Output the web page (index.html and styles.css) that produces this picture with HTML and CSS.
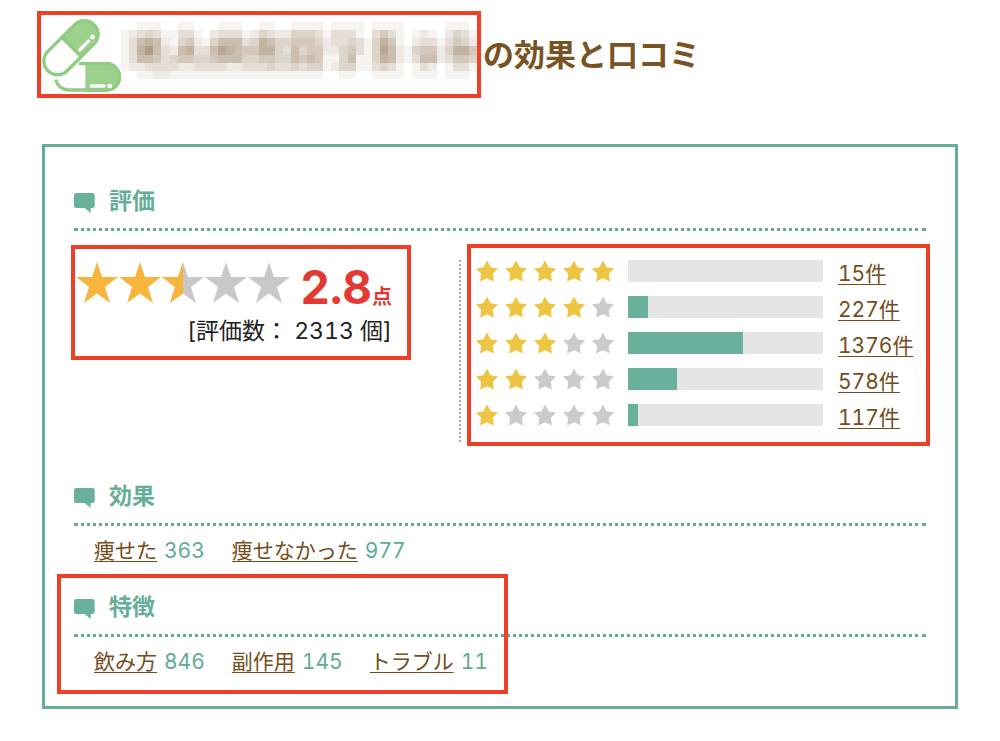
FILE: index.html
```html
<!DOCTYPE html>
<html lang="ja">
<head>
    <meta charset="UTF-8">
    <meta name="viewport" content="width=device-width, initial-scale=1.0">
    <title>効果と口コミ</title>
    <link rel="stylesheet" href="styles.css">
</head>
<body>
    <!-- アイコン定義 -->
    <svg class="defs" width="0" height="0" aria-hidden="true">
        <symbol id="star-big" viewBox="0 0 42 41"><path d="M21 0L26 15H42L29 25L34 41L21 31.500L8 41L13 25L0 15H16Z"/></symbol>
        <symbol id="star-half" viewBox="0 0 42 41"><path d="M21 0V31.500L8 41L13 25L0 15H16Z"/></symbol>
        <symbol id="star" viewBox="0 0 22 22"><path d="M11 0.500L14.600 7.200L22 8.600L16.800 13.800L17.800 21.500L11 18.200L4.200 21.500L5.200 13.800L0 8.600L7.400 7.200Z"/></symbol>
        <symbol id="bubble" viewBox="0 0 63 60"><path d="M7 0H55Q62 0 62 7V38Q62 45 55 45H50V60L32 45H7Q0 45 0 38V7Q0 0 7 0Z"/></symbol>
    </svg>

    <!-- タイトル -->
    <h1 class="title">
        <span class="product">
            <svg class="logo" viewBox="33 38 240 228" aria-hidden="true">
                <g transform="rotate(-45 123 127)">
                    <path class="pill-fill" d="M122 87H184A40 40 0 0 1 184 167H122Z"/>
                    <rect class="pill-line" x="25" y="86" width="196" height="82" rx="41"/>
                    <path class="pill-line" d="M126 86V168"/>
                    <path class="pill-shine" d="M137 150H174"/>
                    <circle class="pill-dot" cx="191" cy="150" r="7"/>
                </g>
                <path class="pill-fill" d="M166 170H229A45 45 0 0 1 229 260H166Z"/>
                <path class="pill-line" d="M147 175H229A39 39 0 0 1 229 254H115Q85 252 77 223"/>
                <path class="pill-shine" d="M184 242H222"/>
                <circle class="pill-dot" cx="239" cy="242" r="7"/>
            </svg>
            <svg class="mosaic" id="mosaic" viewBox="0 0 44 8" preserveAspectRatio="none" shape-rendering="crispEdges" aria-hidden="true"></svg>
        </span>
        <span>の効果と口コミ</span>
    </h1>

    <main class="card">
        <!-- 評価 -->
        <section class="section">
            <h2><svg class="bubble" aria-hidden="true"><use href="#bubble"/></svg>評価</h2>
            <div class="rating">
                <div class="summary">
                    <div class="summary-box">
                        <div class="score">
                            <span class="stars-big">
                                <svg class="on"><use href="#star-big"/></svg>
                                <svg class="on"><use href="#star-big"/></svg>
                                <svg><use href="#star-big"/><use class="on" href="#star-half"/></svg>
                                <svg><use href="#star-big"/></svg>
                                <svg><use href="#star-big"/></svg>
                            </span>
                            <strong>2.8<small>点</small></strong>
                        </div>
                        <p class="count">[評価数： 2313 個]</p>
                    </div>
                </div>
                <div class="detail">
                    <ul class="bars">
                        <li>
                            <span class="stars"><svg class="on"><use href="#star"/></svg><svg class="on"><use href="#star"/></svg><svg class="on"><use href="#star"/></svg><svg class="on"><use href="#star"/></svg><svg class="on"><use href="#star"/></svg></span>
                            <span class="bar"><span class="fill" style="width: 0%"></span></span>
                            <a href="#">15件</a>
                        </li>
                        <li>
                            <span class="stars"><svg class="on"><use href="#star"/></svg><svg class="on"><use href="#star"/></svg><svg class="on"><use href="#star"/></svg><svg class="on"><use href="#star"/></svg><svg><use href="#star"/></svg></span>
                            <span class="bar"><span class="fill" style="width: 10%"></span></span>
                            <a href="#">227件</a>
                        </li>
                        <li>
                            <span class="stars"><svg class="on"><use href="#star"/></svg><svg class="on"><use href="#star"/></svg><svg class="on"><use href="#star"/></svg><svg><use href="#star"/></svg><svg><use href="#star"/></svg></span>
                            <span class="bar"><span class="fill" style="width: 59%"></span></span>
                            <a href="#">1376件</a>
                        </li>
                        <li>
                            <span class="stars"><svg class="on"><use href="#star"/></svg><svg class="on"><use href="#star"/></svg><svg><use href="#star"/></svg><svg><use href="#star"/></svg><svg><use href="#star"/></svg></span>
                            <span class="bar"><span class="fill" style="width: 25%"></span></span>
                            <a href="#">578件</a>
                        </li>
                        <li>
                            <span class="stars"><svg class="on"><use href="#star"/></svg><svg><use href="#star"/></svg><svg><use href="#star"/></svg><svg><use href="#star"/></svg><svg><use href="#star"/></svg></span>
                            <span class="bar"><span class="fill" style="width: 5%"></span></span>
                            <a href="#">117件</a>
                        </li>
                    </ul>
                </div>
            </div>
        </section>

        <!-- 効果 -->
        <section class="section">
            <h2><svg class="bubble" aria-hidden="true"><use href="#bubble"/></svg>効果</h2>
            <ul class="tags">
                <li><a href="#">痩せた</a><span>363</span></li>
                <li><a href="#">痩せなかった</a><span>977</span></li>
            </ul>
        </section>

        <!-- 特徴 -->
        <section class="section marked">
            <h2><svg class="bubble" aria-hidden="true"><use href="#bubble"/></svg>特徴</h2>
            <ul class="tags">
                <li><a href="#">飲み方</a><span>846</span></li>
                <li><a href="#">副作用</a><span>145</span></li>
                <li><a href="#">トラブル</a><span>11</span></li>
            </ul>
        </section>
    </main>

    <script src="mosaic.js"></script>
</body>
</html>
```

FILE: styles.css
```css
* { margin: 0; padding: 0; box-sizing: border-box; }
body { padding: 11px 42px 32px; background: #fff; color: #222; font-family: Inter, "Noto Sans CJK JP", sans-serif; font-size: 21px; font-variant-numeric: tabular-nums; }
ul { list-style: none; }
a { color: #754c1b; text-decoration: underline; text-decoration-thickness: 1px; text-underline-offset: 3px; }
.defs { position: absolute; }

/* タイトル */
.title { display: flex; align-items: center; gap: 2px; margin: 0 0 46px -5px; color: #795321; font-size: 31px; line-height: 44px; white-space: nowrap; }
.product { display: flex; align-items: flex-start; width: 444px; height: 87px; border: 4px solid #ee4027; }
.logo { flex: none; width: 80px; height: 76px; margin-top: 3px; }
.mosaic { flex: 1; min-width: 0; height: 65px; margin-top: 7px; fill: #7a5730; }
.pill-fill { fill: #9bd18c; }
.pill-line { fill: none; stroke: #90cc82; stroke-width: 10; }
.pill-shine { stroke: #fff; stroke-width: 10; stroke-linecap: round; }
.pill-dot { fill: #fff; }

/* カード */
.card { padding: 37px 29px 29px; border: 3px solid #65ae98; }
.section h2 { display: flex; align-items: center; gap: 14px; padding-bottom: 10px; border-bottom: 3px dotted #5fac94; color: #65ae98; font-size: 23px; line-height: 34px; }
.bubble { width: 21px; height: 20px; margin-top: 4px; fill: #6ab19d; }

/* 評価 */
.rating { display: grid; grid-template-columns: 385fr 467fr; padding: 29px 0 37px; }
.summary-box { position: relative; width: 318px; }
.score { display: flex; justify-content: space-between; height: 54px; padding: 2px 0 0 2px; }
.stars-big { display: flex; gap: 1px; fill: #c8c8c8; }
.stars-big svg { width: 42px; height: 41px; }
.score strong { color: #e23a32; font-size: 46px; line-height: 50px; white-space: nowrap; }
.score small { font-size: 20px; }
.count { font-size: 23px; line-height: 34px; text-align: right; white-space: nowrap; }
.on, .stars-big .on { fill: #f8b53e; }
.detail { padding-left: 15px; border-left: 2px dotted #aaa; }
.bars { position: relative; padding-bottom: 2px; }
.bars li { display: flex; align-items: flex-start; height: 36px; }
.bars a { line-height: 28px; white-space: nowrap; }
.stars { display: flex; gap: 7px; margin-right: 14px; fill: #cbcbcb; }
.stars svg { width: 22px; height: 22px; }
.stars .on { fill: #eec443; }
.bar { flex: 0 1 195px; height: 22px; margin-right: 15px; background: #e5e5e5; }
.fill { display: block; height: 100%; background: #6ab19d; }

/* 件数リンク */
.tags { display: flex; gap: 27px; padding: 10px 0 24px 20px; line-height: 30px; }
.tags li { display: flex; gap: 7px; white-space: nowrap; }
.tags span { color: #5fac94; }
.marked { position: relative; }
.marked .tags { padding-bottom: 0; }

/* 赤枠 */
.summary-box::after, .bars::after, .marked::after { content: ""; position: absolute; border: 4px solid #ee4027; box-sizing: border-box; pointer-events: none; }
.summary-box::after { inset: -15px -19px -12px -3px; }
.bars::after { inset: -16px -4px -4px -9px; }
.marked::after { top: -16px; bottom: -17px; left: -17px; width: 451px; }
```

FILE: mosaic.js
```javascript
// 各行の数字はモザイクの濃さ (0-9)
const rows = [
    '00111001100011100110011110111101111000001110',
    '12343113310233312432244431333103531012102431',
    '13676214521466634764455542334314751023313542',
    '13796326733687655774364552245314862145524775',
    '13665345544566644554465651146114762136623554',
    '12233332233332233343343441244113431013201331',
    '00112211111111111111111110011001111011101110',
    '00000000000000000000000000000000000000000000'
];

const mosaic = document.getElementById('mosaic');
rows.forEach((row, y) => {
    [...row].forEach((level, x) => {
        const rect = document.createElementNS('http://www.w3.org/2000/svg', 'rect');
        rect.setAttribute('x', x);
        rect.setAttribute('y', y);
        rect.setAttribute('width', 1);
        rect.setAttribute('height', 1);
        rect.setAttribute('fill-opacity', level * 0.065);
        mosaic.appendChild(rect);
    });
});
```
